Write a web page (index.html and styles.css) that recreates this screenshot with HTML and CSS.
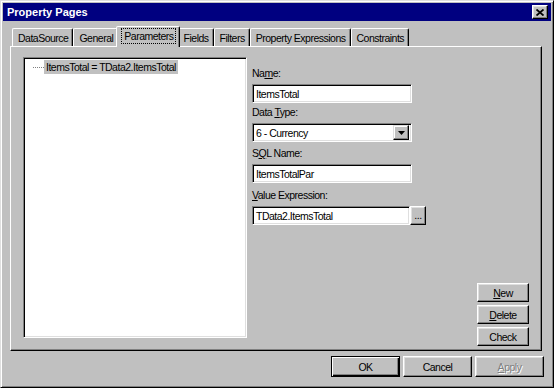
FILE: index.html
```html
<!DOCTYPE html>
<html lang="en">
<head>
    <meta charset="UTF-8">
    <title>Property Pages</title>
    <link rel="stylesheet" href="styles.css">
</head>
<body>
    <div class="window">
        <div class="titlebar">
            <span class="title">Property Pages</span>
            <div class="close-btn">
                <svg width="8" height="7" viewBox="0 0 8 7">
                    <path d="M0.5 0.5 L7.5 6.5 M7.5 0.5 L0.5 6.5" stroke="#000" stroke-width="1.8" fill="none"/>
                </svg>
            </div>
        </div>

        <div class="content">
            <div class="tabs">
                <div class="tab">DataSource</div>
                <div class="tab">General</div>
                <div class="tab active"><span class="focus">Parameters</span></div>
                <div class="tab">Fields</div>
                <div class="tab">Filters</div>
                <div class="tab">Property Expressions</div>
                <div class="tab">Constraints</div>
            </div>

            <div class="panel">
                <div class="tree">
                    <div class="tree-item">
                        <span class="tree-line"></span>
                        <span class="tree-label">ItemsTotal = TData2.ItemsTotal</span>
                    </div>
                </div>

                <div class="editor">
                    <div class="fields">
                        <div class="label">Na<u>m</u>e:</div>
                        <div class="edit gap-s">ItemsTotal</div>

                        <div class="label">Data <u>T</u>ype:</div>
                        <div class="edit combo gap-m">
                            <span>6 - Currency</span>
                            <div class="drop-btn">
                                <svg width="7" height="4" viewBox="0 0 7 4"><polygon points="0,0 7,0 3.5,4" fill="#000"/></svg>
                            </div>
                        </div>

                        <div class="label">S<u>Q</u>L Name:</div>
                        <div class="edit gap-l">ItemsTotalPar</div>

                        <div class="label"><u>V</u>alue Expression:</div>
                        <div class="edit-row">
                            <div class="edit short">TData2.ItemsTotal</div>
                            <div class="btn dots">...</div>
                        </div>
                    </div>

                    <div class="side-buttons">
                        <div class="btn side"><u>N</u>ew</div>
                        <div class="btn side"><u>D</u>elete</div>
                        <div class="btn side">Check</div>
                    </div>
                </div>
            </div>

            <div class="footer">
                <div class="btn wide default">OK</div>
                <div class="btn wide">Cancel</div>
                <div class="btn wide disabled"><u>A</u>pply</div>
            </div>
        </div>
    </div>
</body>
</html>
```

FILE: styles.css
```css
body {
    margin: 0;
    background-color: #c0c0c0;
    font-family: "Liberation Sans", Arial, sans-serif;
    font-size: 10.5px;
    letter-spacing: -0.5px;
    color: #000;
}

.window {
    width: 554px;
    height: 388px;
    box-sizing: border-box;
    padding: 2px;
    background-color: #c0c0c0;
    border: 1px solid;
    border-color: #dfdfdf #000 #000 #dfdfdf;
    box-shadow: inset 1px 1px #fff, inset -1px -1px #808080;
}

.titlebar {
    height: 18px;
    background-color: #000080;
    display: flex;
    align-items: center;
    justify-content: space-between;
    padding: 0 3px 0 4px;
}

.title {
    color: white;
    font-size: 11px;
    font-weight: bold;
    letter-spacing: 0;
}

.close-btn {
    width: 16px;
    height: 14px;
    box-sizing: border-box;
    background-color: #c0c0c0;
    border: 1px solid;
    border-color: #fff #000 #000 #fff;
    box-shadow: inset -1px -1px #808080, inset 1px 1px #dfdfdf;
    display: flex;
    align-items: center;
    justify-content: center;
}

.content {
    padding: 5px 9px 0 7px;
}

/* tab strip */
.tabs {
    display: flex;
    align-items: flex-end;
    height: 20px;
    padding-left: 2px;
}

.tab {
    height: 18px;
    box-sizing: border-box;
    padding: 0 4px 0 5px;
    display: flex;
    align-items: center;
    border: 1px solid;
    border-bottom: none;
    border-color: #fff #000 transparent #fff;
    box-shadow: inset -1px 0 #808080;
    border-radius: 2px 2px 0 0;
}

.tab.active {
    height: 21px;
    margin: 0 -2px -1px;
    padding: 0 4px 2px 5px;
    position: relative;
    z-index: 1;
    background-color: #c0c0c0;
}

.focus {
    outline: 1px dotted #000;
    padding: 1px 1px 1px 2px;
}

/* tab page */
.panel {
    height: 305px;
    box-sizing: border-box;
    display: flex;
    padding: 10px 12px 4px 12px;
    border: 1px solid;
    border-color: #fff #000 #000 #fff;
    box-shadow: inset -1px -1px #808080;
}

.tree {
    width: 224px;
    height: 281px;
    box-sizing: border-box;
    background: white;
    padding: 2px;
    border: 1px solid;
    border-color: #808080 #fff #fff #808080;
    box-shadow: inset 1px 1px #000, inset -1px -1px #dfdfdf;
}

.tree-item {
    display: flex;
    align-items: center;
    height: 14px;
    padding-left: 7px;
}

.tree-line {
    width: 11px;
    border-top: 1px dotted #808080;
}

.tree-label {
    background-color: #c0c0c0;
    padding: 0 2px;
    line-height: 14px;
}

.editor {
    flex: 1;
    display: flex;
    flex-direction: column;
    margin-left: 5px;
}

.fields {
    margin-top: 10px;
}

.label {
    line-height: 13px;
    margin-bottom: 4px;
}

.gap-s {
    margin-bottom: 3px;
}

.gap-m {
    margin-bottom: 5px;
}

.gap-l {
    margin-bottom: 6px;
}

.edit {
    width: 160px;
    height: 19px;
    box-sizing: border-box;
    background: white;
    padding-left: 3px;
    display: flex;
    align-items: center;
    border: 1px solid;
    border-color: #808080 #fff #fff #808080;
    box-shadow: inset 1px 1px #000, inset -1px -1px #dfdfdf;
}

.edit.short {
    width: 158px;
}

.combo {
    justify-content: space-between;
    padding-right: 2px;
}

.drop-btn {
    width: 16px;
    height: 15px;
    box-sizing: border-box;
    background-color: #c0c0c0;
    border: 1px solid;
    border-color: #dfdfdf #000 #000 #dfdfdf;
    box-shadow: inset -1px -1px #808080, inset 1px 1px #fff;
    display: flex;
    align-items: center;
    justify-content: center;
}

.edit-row {
    display: flex;
}

/* buttons */
.btn {
    box-sizing: border-box;
    background-color: #c0c0c0;
    border: 1px solid;
    border-color: #fff #000 #000 #fff;
    box-shadow: inset -1px -1px #808080, inset 1px 1px #dfdfdf;
    display: flex;
    align-items: center;
    justify-content: center;
}

.dots {
    width: 16px;
    height: 19px;
    padding-bottom: 2px;
}

.side-buttons {
    margin-top: auto;
    align-self: flex-end;
    display: flex;
    flex-direction: column;
    gap: 3px;
}

.side {
    width: 52px;
    height: 19px;
}

.footer {
    display: flex;
    justify-content: flex-end;
    gap: 3px;
    margin-top: 5px;
    margin-right: -2px;
}

.wide {
    width: 69px;
    height: 21px;
}

.default {
    border-color: #000;
    box-shadow: inset 1px 1px #fff, inset -1px -1px #000, inset -2px -2px #808080;
}

.disabled {
    color: #808080;
    text-shadow: 1px 1px #fff;
}
```
